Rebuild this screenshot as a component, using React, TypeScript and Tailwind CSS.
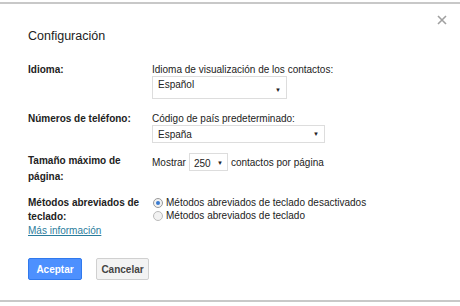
export default function App() {
  const font = { fontFamily: '"Liberation Sans", Arial, sans-serif' };
  return (
    <div className="w-[460px] h-[306px] bg-white overflow-hidden" style={font}>
      <div className="mt-[2px] h-[300px] border-y-2 border-[#c8c8c8] relative px-[28px] text-[#222]">
        <button className="absolute right-[12px] top-[10px]">
          <svg width="12" height="12" viewBox="0 0 12 12">
            <path d="M2 2 L10 10 M10 2 L2 10" stroke="#a0a0a0" strokeWidth="1.6" />
          </svg>
        </button>
        <h1 className="pt-[22px] text-[12.5px] leading-[20px] text-[#222]">Configuración</h1>

        <div className="mt-[17px] grid grid-cols-[124px_1fr] text-[10px] leading-[13px]">
          <div className="font-bold">Idioma:</div>
          <div>
            <div>Idioma de visualización de los contactos:</div>
            <div className="w-[135px] h-[23px] border border-[#ddd] flex items-start justify-between px-[5px] pt-[1px]">
              <span>Español</span>
              <span className="text-[6px] mt-[6px]">▼</span>
            </div>
          </div>

          <div className="font-bold mt-[13px]">Números de teléfono:</div>
          <div className="mt-[13px]">
            <div>Código de país predeterminado:</div>
            <div className="w-[173px] h-[18px] border border-[#ddd] flex items-center justify-between px-[5px]">
              <span>España</span>
              <span className="text-[6px]">▼</span>
            </div>
          </div>

          <div className="font-bold mt-[10px] leading-[16px]">Tamaño máximo de<br />página:</div>
          <div className="mt-[10px] h-[18px] flex items-center gap-[3px]">
            <span>Mostrar</span>
            <span className="w-[39px] h-[18px] border border-[#ddd] flex items-center justify-between px-[4px] pt-[2px]">
              <span>250</span>
              <span className="text-[6px]">▼</span>
            </span>
            <span>contactos por página</span>
          </div>

          <div className="mt-[11px] leading-[14px]">
            <div className="font-bold">Métodos abreviados de<br />teclado:</div>
            <a className="text-[#2a7c9c] underline">Más información</a>
          </div>
          <div className="mt-[11px] leading-[13px]">
            <label className="flex items-center gap-[3px]">
              <span className="ml-[1px] w-[10px] h-[10px] rounded-full border border-[#999] bg-[#f2f2f2] flex items-center justify-center">
                <span className="w-[4px] h-[4px] rounded-full bg-[#3a7bd0]" />
              </span>
              <span>Métodos abreviados de teclado desactivados</span>
            </label>
            <label className="flex items-center gap-[3px]">
              <span className="ml-[1px] w-[10px] h-[10px] rounded-full border border-[#bbb] bg-[#f2f2f2]" />
              <span>Métodos abreviados de teclado</span>
            </label>
          </div>
        </div>

        <div className="mt-[20px] flex gap-[14px] text-[10px] font-bold">
          <button className="w-[54px] h-[22px] bg-[#4d90fe] border border-[#3079ed] text-white rounded-[2px]">Aceptar</button>
          <button className="w-[53px] h-[22px] bg-[#f3f3f3] border border-[#d0d0d0] text-[#444] rounded-[2px]">Cancelar</button>
        </div>
      </div>
    </div>
  );
}
